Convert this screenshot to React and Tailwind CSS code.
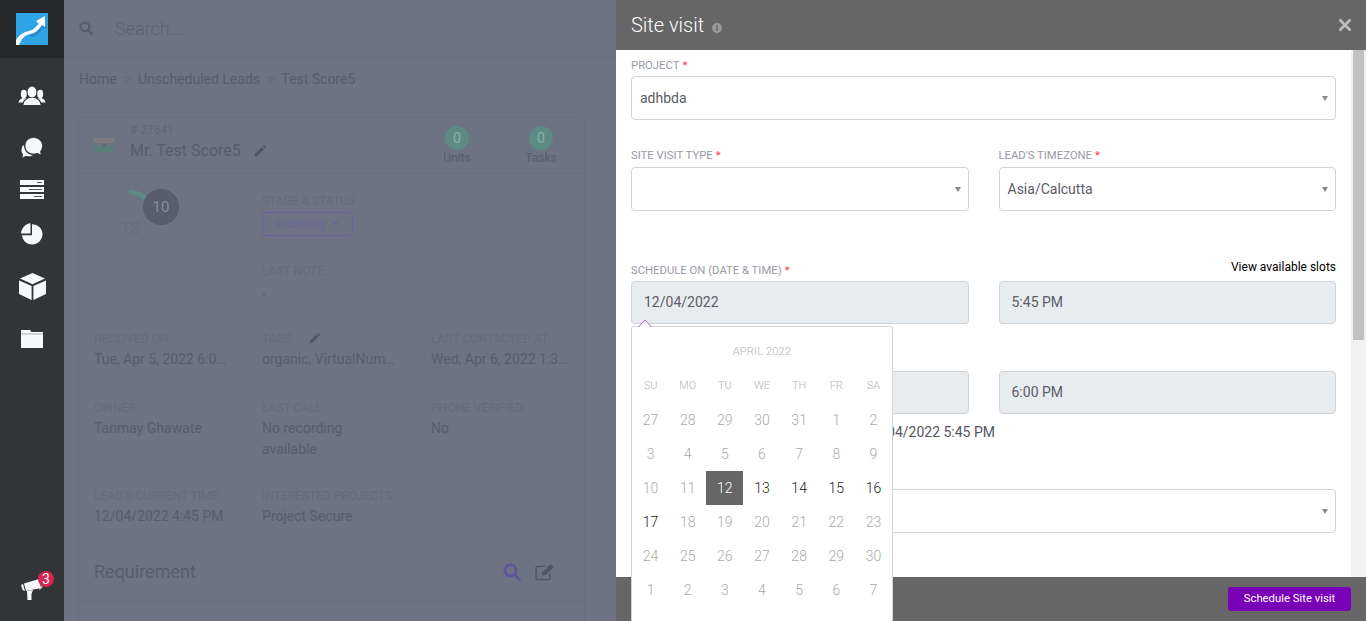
import React from "react";

const font = { fontFamily: "Roboto, sans-serif" };

const Logo = () => (
  <svg width="32" height="32" viewBox="0 0 32 32">
    <rect width="32" height="32" fill="#2ea3e6" />
    <path d="M30 6 L31 16 L27 15 C23 20 21 23 15 24 L14 22 C20 21 23 17 26 13 L30 14 Z" fill="#2588c4" />
    <path d="M0 32 L0 27 C4 21 8 19 13 18 C18 17 19 14 23 11 L20 8 L29 3 L29 14 L26 12 C22 17 20 20 14 21 C9 22 6 25 3 32 Z" fill="#fff" />
  </svg>
);
const People = () => (
  <svg width="28" height="20" viewBox="0 0 28 20" fill="#f8f9fd">
    <ellipse cx="14" cy="6" rx="4.4" ry="5.6" />
    <path d="M5.5 19 C6 14 9 13.5 11 12 L17 12 C19 13.5 22 14 22.5 19 Z" />
    <ellipse cx="5.8" cy="8" rx="3" ry="4.2" />
    <path d="M0.5 16.5 C1 13.5 3 13 4.5 12 L8.5 12.5 C6.5 13.5 5 15 4.6 16.5 Z" />
    <ellipse cx="22.2" cy="8" rx="3" ry="4.2" />
    <path d="M27.5 16.5 C27 13.5 25 13 23.5 12 L19.5 12.5 C21.5 13.5 23 15 23.4 16.5 Z" />
  </svg>
);
const Chat = () => (
  <svg width="22" height="22" viewBox="0 0 22 22" fill="#f8f9fd">
    <path d="M3 8 C1 9 0.5 11 0.5 13 C0.5 15 1 16.5 2 17 L1.5 20.5 L5 18.8 C7 19.6 10 19.6 12 18 C7 18 3 14 3 8 Z" />
    <path d="M12.5 0.5 C7.5 0.5 4 4.2 4 8.8 C4 13.4 7.5 17 12.5 17 C14 17 15 16.8 16 16.3 L20.5 18 L19.4 14.5 C20.8 13 21.5 11 21.5 8.8 C21.5 4.2 17.5 0.5 12.5 0.5 Z" stroke="#323436" strokeWidth="0.8" />
  </svg>
);
const Server = () => (
  <svg width="24" height="19" viewBox="0 0 24 19">
    <rect width="24" height="5" fill="#f8f9fd" />
    <rect y="7" width="24" height="5" fill="#f8f9fd" />
    <rect y="14" width="24" height="5" fill="#f8f9fd" />
    <rect x="17" y="2" width="5" height="1" fill="#55585c" />
    <rect x="9" y="9" width="13" height="1" fill="#55585c" />
    <rect x="14" y="16" width="8" height="1" fill="#55585c" />
  </svg>
);
const Pie = () => (
  <svg width="22" height="22" viewBox="0 0 22 22" fill="#f8f9fd">
    <path d="M9.5 0.2 L9.5 10.5 L0 10.5 C0.3 5 4.5 0.6 9.5 0.2 Z" />
    <path d="M11 1.2 C16.8 1.2 21.5 5.5 21.5 11 C21.5 16.8 16.8 21.5 11 21.5 C5.8 21.5 1.6 17.6 1 12.2 L11 12.2 Z" />
  </svg>
);
const Cube = () => (
  <svg width="27" height="27" viewBox="0 0 27 27" fill="#f8f9fd">
    <path d="M13.5 0 L26 5.6 L13.5 11.2 L1 5.6 Z" />
    <path d="M0 7.4 L12.6 13 L12.6 27 L0 21 Z" />
    <path d="M27 7.4 L14.4 13 L14.4 27 L27 21 Z" />
  </svg>
);
const Folder = () => (
  <svg width="22" height="18" viewBox="0 0 22 18">
    <path d="M0 0 L9 0 L10.5 2 L22 2 L22 18 L0 18 Z" fill="#f8f9fd" />
    <rect y="3.5" width="22" height="1" fill="#a9abb0" />
  </svg>
);
const Horn = () => (
  <svg width="22" height="21" viewBox="0 0 22 21" fill="#f8f9fd">
    <path d="M0 6 L2 5 L4 12 L1.5 11 Z" />
    <path d="M3 4.5 L18 0 L20 9 L5 12 Z" />
    <path d="M6 12 L12 11 L10.5 15 L10.5 21 L6.5 21 Z" />
    <path d="M18 10 C20 10 21 9 21 6" fill="none" stroke="#f8f9fd" />
  </svg>
);
const Pencil = ({ size = 13, color = "#4e5566" }) => (
  <svg width={size} height={size} viewBox="0 0 24 24" fill={color}>
    <path d="M3 21 L4 15.5 L16 3.5 L20.5 8 L8.5 20 Z" />
    <path d="M17.5 2 L19 1 C20 .5 21 .5 22 1.5 L22.8 2.5 C23.5 3.5 23.5 4.5 22.8 5.2 L22 6.5 Z" />
  </svg>
);
const Caret = () => (
  <svg width="6" height="5" viewBox="0 0 6 5" className="shrink-0">
    <path d="M0 0 L6 0 L3 5 Z" fill="#888" />
  </svg>
);

const Dim = ({ label, value, extra }) => (
  <div className="min-w-0">
    <div className="flex items-center h-[14px] text-[12px] leading-[14px] text-[#636b7b] whitespace-nowrap">
      {label}
      {extra}
    </div>
    <div className="mt-[3px] text-[14px] leading-[21px] text-[#565e6e] whitespace-nowrap">{value}</div>
  </div>
);

const Req = () => <span className="text-[#ff2d4f] ml-[3px]">*</span>;

const Label = ({ children }) => (
  <div className="h-[14px] text-[11.3px] leading-[14px] text-[#9a9aa6] uppercase whitespace-nowrap">
    {children}
    <Req />
  </div>
);

const Select = ({ value }) => (
  <div className="h-[44px] flex items-center justify-between pl-[8px] pr-[7px] bg-white border border-[#ced4da] rounded text-[14px] text-[#5c5c66]">
    <span>{value}</span>
    <Caret />
  </div>
);

const Readonly = ({ value, className = "" }) => (
  <div className={`h-[43px] flex items-center bg-[#e9ecef] border border-[#ced4da] rounded text-[14px] text-[#5c5c66] ${className}`}>
    {value}
  </div>
);

const weeks = [
  [27, 28, 29, 30, 31, 1, 2],
  [3, 4, 5, 6, 7, 8, 9],
  [10, 11, 12, 13, 14, 15, 16],
  [17, 18, 19, 20, 21, 22, 23],
  [24, 25, 26, 27, 28, 29, 30],
  [1, 2, 3, 4, 5, 6, 7],
];
const days = ["SU", "MO", "TU", "WE", "TH", "FR", "SA"];

const Calendar = () => (
  <div className="absolute left-[15px] top-[326px] z-10 w-[262px] h-[320px] bg-white border border-[#d4d4d4] rounded-t-[3px]">
    <svg width="16" height="8" viewBox="0 0 16 8" className="absolute left-[6px] top-[-8px]">
      <path d="M0.5 8 L7 1 L13.5 8" fill="#fff" stroke="#9c5fd6" strokeWidth="1" />
    </svg>
    <div className="h-[48px] pt-[18px] text-center text-[11px] leading-[14px] text-[#b3b3b3] font-light tracking-[0.2px]">APRIL 2022</div>
    <div className="grid grid-cols-7 h-[20px] mt-[1px] text-center text-[11px] leading-[20px] text-[#b3b3b3] font-light">
      {days.map((d) => (
        <div key={d}>{d}</div>
      ))}
    </div>
    <div className="mt-[7px]">
      {weeks.map((w, i) => (
        <div key={i} className="grid grid-cols-7 h-[34px] text-center text-[14px] leading-[34px] font-light">
          {w.map((d, j) => {
            const selected = i === 2 && j === 2;
            const active = (i === 2 && j > 2) || (i === 3 && j === 0);
            return (
              <div
                key={j}
                className={selected ? "bg-[#666] text-white" : active ? "text-[#222]" : "text-[#aaa]"}
              >
                {d}
              </div>
            );
          })}
        </div>
      ))}
    </div>
  </div>
);

export default function App() {
  return (
    <div className="flex h-[621px] w-[1366px] overflow-hidden bg-[#6c7382]" style={font}>
      <aside className="w-16 shrink-0 flex flex-col items-center bg-[#323436]">
        <div className="w-full h-[58px] shrink-0 flex items-center justify-center bg-[#26282a]">
          <Logo />
        </div>
        <div className="mt-[28px]"><People /></div>
        <div className="mt-[31px]"><Chat /></div>
        <div className="mt-[21px]"><Server /></div>
        <div className="mt-[24px]"><Pie /></div>
        <div className="mt-[28px]"><Cube /></div>
        <div className="mt-[30px]"><Folder /></div>
        <div className="relative mt-auto mb-[21px]">
          <Horn />
          <span className="absolute -right-[11px] -top-[8px] w-4 h-4 rounded-full bg-[#d8234f] text-white text-[14px] leading-4 text-center">3</span>
        </div>
      </aside>

      <main className="w-[552px] shrink-0 overflow-hidden text-[#565e6e]">
        <div className="h-[57px] flex items-center pl-[15px] border-b border-[#687080]">
          <svg width="14" height="14" viewBox="0 0 24 24" fill="none" stroke="#565e6e" strokeWidth="4">
            <circle cx="10" cy="10" r="7.5" />
            <path d="M15.5 15.5 L22 22" strokeLinecap="round" />
          </svg>
          <span className="ml-[22px] text-[18px] font-light text-[#5b6373]">Search...</span>
        </div>
        <div className="h-[46px] flex items-center pl-[15px] border-b border-[#687080] text-[14px]">
          <span>Home</span>
          <span className="mx-[7px] text-[#636b7b]">&gt;</span>
          <span>Unscheduled Leads</span>
          <span className="mx-[7px] text-[#636b7b]">&gt;</span>
          <span>Test Score5</span>
        </div>
        <div className="flex mt-[14px] ml-[14px] h-[600px]">
          <div className="w-[507px] shrink-0 border border-[#667080] rounded-t">
            <div className="h-[56px] flex border-b border-[#667080] relative">
              <div className="ml-[15px] mt-[20px] w-5 h-[14px] flex flex-col shrink-0">
                <div className="h-[5px] bg-[#7f7a7c]" />
                <div className="h-[4px] flex justify-center items-center"><div className="w-[3px] h-[3px] rounded-full bg-[#5a6378]" /></div>
                <div className="h-[5px] bg-[#577f78]" />
              </div>
              <div className="ml-[16px]">
                <div className="text-[12px] leading-[14px] mt-[5px] text-[#5f6777]"># 27641</div>
                <div className="flex items-center mt-[3px]">
                  <span className="text-[16px] leading-[22px]">Mr. Test Score5</span>
                  <span className="ml-[12px]"><Pencil size={13} /></span>
                </div>
              </div>
              <div className="ml-auto flex">
                <div className="w-[84px] flex flex-col items-center mt-[8px]">
                  <div className="w-6 h-6 rounded-full bg-[#5d8a85] text-[#8ab0ab] text-[14px] leading-6 text-center">0</div>
                  <div className="text-[12px] leading-[14px] mt-[1px]">Units</div>
                </div>
                <div className="w-[84px] mr-[1px] flex flex-col items-center mt-[8px]">
                  <div className="w-6 h-6 rounded-full bg-[#5d8a85] text-[#8ab0ab] text-[14px] leading-6 text-center">0</div>
                  <div className="text-[12px] leading-[14px] mt-[1px]">Tasks</div>
                </div>
              </div>
            </div>
            <div className="pl-[15px] pr-1">
              <div className="grid grid-cols-[168px_169px_1fr]">
                <div className="h-[158px] relative">
                  <svg width="40" height="24" viewBox="0 0 40 24" className="absolute left-[30px] top-[12px]">
                    <path d="M5 6 C11 6 17 8 22 13" fill="none" stroke="#5d8a85" strokeWidth="5" />
                  </svg>
                  <div className="absolute left-[49px] top-[15px] w-9 h-9 rounded-full bg-[#565d6c] text-[#8990a0] text-[15px] leading-9 text-center">10</div>
                  <div className="absolute left-[27px] top-[45px] text-[16px] leading-5 font-light text-[#636b7a]">TS</div>
                </div>
                <div className="col-span-2 pt-[20px]">
                  <div className="h-[14px] text-[12px] leading-[14px] text-[#636b7b]">STAGE &amp; STATUS</div>
                  <div className="mt-[4px] w-[91px] h-[24px] flex items-center justify-center gap-[7px] border border-[#6d5fa0] rounded-[3px] text-[12px] text-[#6a6598]">
                    Incoming
                    <svg width="7" height="4" viewBox="0 0 7 4"><path d="M0 0 L7 0 L3.5 4 Z" fill="#6a6598" /></svg>
                  </div>
                  <div className="mt-[28px] h-[14px] text-[12px] leading-[14px] text-[#636b7b]">LAST NOTE</div>
                  <div className="mt-[6px] text-[14px] leading-[21px]">-</div>
                </div>
              </div>
              <div className="grid grid-cols-[168px_169px_1fr]">
                <Dim label="RECEIVED ON" value="Tue, Apr 5, 2022 6:0…" />
                <Dim label="TAGS" value="organic, VirtualNum…" extra={<span className="ml-[16px]"><Pencil size={12} /></span>} />
                <Dim label="LAST CONTACTED AT" value="Wed, Apr 6, 2022 1:3…" />
              </div>
              <div className="grid grid-cols-[168px_169px_1fr] mt-[31px]">
                <Dim label="OWNER" value="Tanmay Ghawate" />
                <Dim label="LAST CALL" value={<>No recording<br />available</>} />
                <Dim label="PHONE VERIFIED" value="No" />
              </div>
              <div className="grid grid-cols-[168px_169px_1fr] mt-[29px]">
                <Dim label="LEAD'S CURRENT TIME" value="12/04/2022 4:45 PM" />
                <Dim label="INTERESTED PROJECTS" value="Project Secure" />
              </div>
            </div>
            <div className="mt-[15px] h-[59px] flex items-center pl-[15px] pr-[29px] border-t border-b border-[#687080]">
              <span className="text-[18px]">Requirement</span>
              <svg width="18" height="18" viewBox="0 0 24 24" fill="none" stroke="#5f5796" strokeWidth="3.6" className="ml-auto">
                <circle cx="10" cy="10" r="7.5" />
                <path d="M15.5 15.5 L22 22" strokeLinecap="round" />
              </svg>
              <svg width="20" height="18" viewBox="0 0 20 18" fill="none" className="ml-[14px]">
                <path d="M15 10.5 V15 C15 16 14.4 16.6 13.5 16.6 H2.5 C1.5 16.6 1 16 1 15 V5 C1 4 1.5 3.4 2.5 3.4 H10" stroke="#4e5566" strokeWidth="1.4" />
                <path d="M7 12.5 L7.6 9 L15.5 1.2 L18.6 4.2 L10.6 12 Z" fill="#4e5566" />
              </svg>
            </div>
          </div>
          <div className="ml-[31px] w-10 shrink-0 border-l border-[#5d6473]" />
        </div>
      </main>

      <section className="relative flex-1 flex flex-col min-w-0">
        <header className="h-[50px] shrink-0 flex items-center pl-[15px] pr-[14px] bg-[#666]">
          <span className="text-[20px] font-light text-white">Site visit</span>
          <svg width="10" height="10" viewBox="0 0 10 10" className="ml-[8px] mt-[5px]">
            <circle cx="5" cy="5" r="5" fill="#999" />
            <rect x="4.2" y="4.2" width="1.6" height="3.6" fill="#666" />
            <rect x="4.2" y="2" width="1.6" height="1.4" fill="#666" />
          </svg>
          <svg width="14" height="14" viewBox="0 0 14 14" className="ml-auto">
            <path d="M1.5 1.5 L12.5 12.5 M12.5 1.5 L1.5 12.5" stroke="#bfbfbf" strokeWidth="2.6" />
          </svg>
        </header>
        <div className="flex-1 min-h-0 flex bg-white overflow-hidden">
          <div className="flex-1 min-w-0 pl-[15px] pr-[15px] pt-[9px]">
            <Label>Project</Label>
            <div className="mt-[3px]"><Select value="adhbda" /></div>
            <div className="grid grid-cols-2 gap-x-[30px] mt-[29px]">
              <div>
                <Label>Site visit type</Label>
                <div className="mt-[4px]"><Select value="" /></div>
              </div>
              <div>
                <Label>Lead's timezone</Label>
                <div className="mt-[4px]"><Select value="Asia/Calcutta" /></div>
              </div>
            </div>
            <div className="grid grid-cols-2 gap-x-[30px] mt-[53px]">
              <div>
                <Label>Schedule on (date &amp; time)</Label>
                <div className="mt-[3px]"><Readonly value="12/04/2022" className="pl-[12px]" /></div>
              </div>
              <div>
                <div className="h-[14px] -mt-[4px] text-right text-[12px] leading-[14px] text-black">View available slots</div>
                <div className="mt-[7px]"><Readonly value="5:45 PM" className="pl-[12px]" /></div>
              </div>
            </div>
            <div className="grid grid-cols-2 gap-x-[30px] mt-[47px]">
              <Readonly value="" />
              <Readonly value="6:00 PM" className="pl-[12px]" />
            </div>
            <div className="mt-[8px] h-[20px] text-right pr-[341px] text-[14px] leading-[20px] text-[#55555f]">12/04/2022 5:45 PM</div>
            <div className="mt-[47px]"><Select value="" /></div>
          </div>
          <div className="w-[15px] shrink-0 bg-[#f1f1f1]">
            <div className="ml-[2px] w-[11px] h-[290px] bg-[#c1c1c1]" />
          </div>
        </div>
        <footer className="h-[44px] shrink-0 flex items-center justify-end pr-[15px] bg-[#666]">
          <button className="w-[123px] h-[24px] rounded-[3px] bg-[#7a00b8] text-white text-[11.3px]">Schedule Site visit</button>
        </footer>
        <Calendar />
      </section>
    </div>
  );
}
